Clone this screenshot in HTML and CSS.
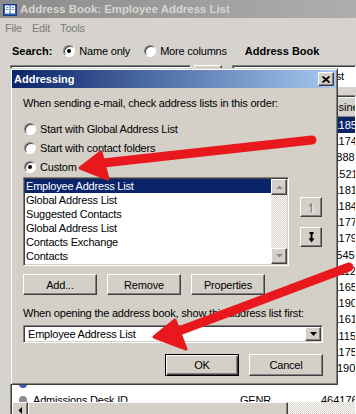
FILE: index.html
```html
<!DOCTYPE html>
<html lang="en">
<head>
    <meta charset="UTF-8">
    <meta name="viewport" content="width=device-width, initial-scale=1.0">
    <title>Address Book: Employee Address List</title>
    <link rel="stylesheet" href="styles.css">
</head>
<body>
    <div class="app">
        <div class="app-title">
            <svg class="book-icon" width="14" height="13" viewBox="0 0 14 13">
                <rect x="0.5" y="1.5" width="13" height="11" fill="#2f5fb8" stroke="#173a80"/>
                <rect x="2" y="2.5" width="4.5" height="8" fill="#fff"/>
                <rect x="7.5" y="2.5" width="4.5" height="8" fill="#fff"/>
                <path d="M3 4.5h2.5M3 6.5h2.5M8.5 4.5H11M8.5 6.5H11" stroke="#6d8fc9"/>
            </svg>
            <span>Address Book: Employee Address List</span>
        </div>
        <ul class="menubar">
            <li>File</li>
            <li>Edit</li>
            <li>Tools</li>
        </ul>
        <div class="searchbar">
            <b>Search:</b>
            <label class="opt"><span class="radio on"></span>Name only</label>
            <label class="opt"><span class="radio"></span>More columns</label>
            <b class="book-label">Address Book</b>
        </div>
        <div class="toolrow">
            <div class="field search-field"></div>
            <div class="btn go-btn">Go</div>
            <div class="field book-combo">Employee Address List</div>
        </div>
        <div class="listview">
            <div class="lv-header">
                <span class="col-name">Name</span>
                <span class="col-title">Title</span>
                <span class="col-phone">Business Phone</span>
            </div>
            <div class="lv-rows">
                <div class="lv-row selected"><i class="row-icon"></i><span class="col-name">Employee Services</span><span class="col-title">HR</span><span class="col-phone">4611852</span></div>
                <div class="lv-row"><i class="row-icon"></i><span class="col-name">Abbott, Karen</span><span class="col-title">ACCT</span><span class="col-phone">4611745</span></div>
                <div class="lv-row"><i class="row-icon"></i><span class="col-name">Accounts Payable</span><span class="col-title">ACCT</span><span class="col-phone">46 8881</span></div>
                <div class="lv-row"><i class="row-icon"></i><span class="col-name">Acosta, Maria</span><span class="col-title">NURS</span><span class="col-phone">4615217</span></div>
                <div class="lv-row"><i class="row-icon"></i><span class="col-name">Adams, Brian</span><span class="col-title">FAC</span><span class="col-phone">4611814</span></div>
                <div class="lv-row"><i class="row-icon"></i><span class="col-name">Adams, Julie</span><span class="col-title">ADMN</span><span class="col-phone">4611842</span></div>
                <div class="lv-row"><i class="row-icon"></i><span class="col-name">Adler, Thomas</span><span class="col-title">IT</span><span class="col-phone">4611779</span></div>
                <div class="lv-row"><i class="row-icon"></i><span class="col-name">Admin Office</span><span class="col-title">ADMN</span><span class="col-phone">4611796</span></div>
                <div class="lv-row"><i class="row-icon"></i><span class="col-name">Admissions</span><span class="col-title">GENR</span><span class="col-phone">46 5451</span></div>
                <div class="lv-row"><i class="row-icon"></i><span class="col-name">Admissions Counter</span><span class="col-title">GENR</span><span class="col-phone">461112</span></div>
                <div class="lv-row"><i class="row-icon"></i><span class="col-name">Admissions Desk A</span><span class="col-title">GENR</span><span class="col-phone">4611655</span></div>
                <div class="lv-row"><i class="row-icon"></i><span class="col-name">Admissions Desk B</span><span class="col-title">GENR</span><span class="col-phone">4611903</span></div>
                <div class="lv-row"><i class="row-icon"></i><span class="col-name">Admissions Desk C</span><span class="col-title">GENR</span><span class="col-phone">4611617</span></div>
                <div class="lv-row"><i class="row-icon"></i><span class="col-name">Admissions Desk D</span><span class="col-title">GENR</span><span class="col-phone">4611154</span></div>
                <div class="lv-row"><i class="row-icon"></i><span class="col-name">Admissions Desk E</span><span class="col-title">GENR</span><span class="col-phone">4611750</span></div>
                <div class="lv-row"><i class="row-icon"></i><span class="col-name">Admissions Desk F</span><span class="col-title">GENR</span><span class="col-phone">46-1901</span></div>
                <div class="lv-row"><i class="row-icon blue"></i><span class="col-name"></span><span class="col-title"></span><span class="col-phone"></span></div>
                <div class="lv-row"><i class="row-icon"></i><span class="col-name">Admissions Desk ID</span><span class="col-title">GENR</span><span class="col-phone">464176</span></div>
            </div>
            <div class="hscroll">
                <div class="btn sb-btn">
                    <svg width="4" height="7" viewBox="0 0 4 7"><path d="M4 0v7L0.5 3.5z" fill="#000"/></svg>
                </div>
                <div class="btn sb-thumb"></div>
                <div class="sb-track"></div>
            </div>
        </div>
    </div>

    <div class="dialog">
        <div class="dlg-title">
            <span>Addressing</span>
            <div class="btn close-btn">
                <svg width="8" height="7" viewBox="0 0 8 7"><path d="M0.5 0.5L7.5 6.5M7.5 0.5L0.5 6.5" stroke="#000" stroke-width="1.8"/></svg>
            </div>
        </div>
        <div class="dlg-body">
            <p class="label">When sending e-mail, check address lists in this order:</p>
            <div class="radios">
                <label class="opt"><span class="radio"></span>Start with Global Address List</label>
                <label class="opt"><span class="radio"></span>Start with contact folders</label>
                <label class="opt"><span class="radio on"></span>Custom</label>
            </div>
            <div class="list-row">
                <div class="listbox">
                    <ul class="items">
                        <li class="selected">Employee Address List</li>
                        <li>Global Address List</li>
                        <li>Suggested Contacts</li>
                        <li>Global Address List</li>
                        <li>Contacts Exchange</li>
                        <li>Contacts</li>
                    </ul>
                    <div class="vscroll">
                        <div class="btn sb-btn">
                            <svg width="7" height="4" viewBox="0 0 7 4"><path d="M0 4h7L3.5 0.5z" fill="#8a8a8a"/></svg>
                        </div>
                        <div class="sb-track"></div>
                        <div class="btn sb-btn">
                            <svg width="7" height="4" viewBox="0 0 7 4"><path d="M0 0h7L3.5 3.5z" fill="#8a8a8a"/></svg>
                        </div>
                    </div>
                </div>
                <div class="move-btns">
                    <div class="btn move-btn">
                        <svg width="7" height="11" viewBox="0 0 7 11">
                            <path d="M3.5 1.5v9M3.5 1.5L1.5 4.5" stroke="#fff" stroke-width="1.6" transform="translate(1 1)"/>
                            <path d="M3.5 1.5v9M3.5 1.5L1.5 4.5" stroke="#8a8a8a" stroke-width="1.6"/>
                        </svg>
                    </div>
                    <div class="btn move-btn">
                        <svg width="7" height="11" viewBox="0 0 7 11">
                            <path d="M1.5 1h4M3.5 1v8" stroke="#000" stroke-width="2"/>
                            <path d="M0.5 6.5h6L3.5 10.5z" fill="#000"/>
                        </svg>
                    </div>
                </div>
            </div>
            <div class="btn-row">
                <div class="btn">Add...</div>
                <div class="btn">Remove</div>
                <div class="btn">Properties</div>
            </div>
            <p class="label second">When opening the address book, show this address list first:</p>
            <div class="combo">
                <span>Employee Address List</span>
                <div class="btn drop-btn">
                    <svg width="7" height="4" viewBox="0 0 7 4"><path d="M0 0h7L3.5 4z" fill="#000"/></svg>
                </div>
            </div>
            <div class="ok-row">
                <div class="btn default">OK</div>
                <div class="btn">Cancel</div>
            </div>
        </div>
    </div>

    <svg class="marks" width="356" height="414" viewBox="0 0 356 414">
        <path d="M312 140L103 163" stroke="#e8181c" stroke-width="9" stroke-linecap="round"/>
        <path d="M80 168L101 152L108 179z" fill="#e8181c" stroke="#e8181c" stroke-width="3" stroke-linejoin="round"/>
        <path d="M349 267L179 331" stroke="#e8181c" stroke-width="9" stroke-linecap="round"/>
        <path d="M154 337L175 320L186 349z" fill="#e8181c" stroke="#e8181c" stroke-width="3" stroke-linejoin="round"/>
    </svg>
</body>
</html>
```

FILE: styles.css
```css
* {
    box-sizing: border-box;
}

body {
    margin: 0;
    width: 356px;
    height: 414px;
    overflow: hidden;
    position: relative;
    background: #d6d3ce;
    font-family: "Liberation Sans", Arial, sans-serif;
    font-size: 11px;
    letter-spacing: -0.2px;
    color: #000;
}

/* background window */

.app-title {
    height: 18px;
    display: flex;
    align-items: center;
    gap: 3px;
    padding-left: 3px;
    background: linear-gradient(90deg, #8b8b8b, #aeaeae);
    color: #d8d5cf;
    font-weight: bold;
    font-size: 11.4px;
    letter-spacing: 0;
}

.menubar {
    list-style: none;
    margin: 0;
    padding: 0;
    height: 20px;
    display: flex;
    align-items: center;
    color: #7a7a7a;
}

.menubar li {
    padding: 0 5px;
}

.searchbar {
    height: 26px;
    display: flex;
    align-items: center;
    padding-left: 12px;
}

.searchbar b {
    letter-spacing: 0;
}

.searchbar .opt {
    margin-left: 11px;
}

.searchbar .opt + .opt {
    margin-left: 14px;
}

.book-label {
    margin-left: 18px;
}

.opt {
    display: flex;
    align-items: center;
}

.radio {
    width: 12px;
    height: 12px;
    flex: none;
    position: relative;
    border-radius: 50%;
    background: #fff;
    border: 1px solid;
    border-color: #808080 #fff #fff #808080;
    box-shadow: inset 1px 1px #404040;
    margin-right: 4px;
}

.radio.on::after {
    content: "";
    position: absolute;
    left: 3px;
    top: 3px;
    width: 4px;
    height: 4px;
    border-radius: 50%;
    background: #000;
}

.toolrow {
    height: 25px;
    display: flex;
    padding: 1px 0 0 10px;
}

.field {
    height: 22px;
    background: #fff;
    border: 1px solid;
    border-color: #808080 #fff #fff #808080;
    box-shadow: inset 1px 1px #404040;
}

.search-field {
    width: 190px;
}

.go-btn {
    width: 30px;
    height: 22px;
    margin-left: 3px;
}

.book-combo {
    width: 130px;
    margin-left: 10px;
    padding: 0 0 0 3px;
    line-height: 20px;
    white-space: nowrap;
    overflow: hidden;
}

.listview {
    margin: 6px 0 0 10px;
    height: 330px;
    background: #fff;
    border: 1px solid;
    border-color: #808080 #fff #fff #808080;
    box-shadow: inset 1px 1px #404040;
    padding: 1px 0 0 1px;
    overflow: hidden;
}

.lv-header {
    display: flex;
    height: 20px;
    background: #d6d3ce;
    white-space: nowrap;
}

.lv-header span {
    display: flex;
    align-items: center;
    padding-left: 1px;
    border: 1px solid;
    border-color: #fff #808080 #808080 #fff;
}

.lv-rows {
    height: 285px;
    overflow: hidden;
}

.lv-row {
    height: 16.2px;
    display: flex;
    align-items: center;
    white-space: nowrap;
    padding-left: 7px;
}

.lv-row.selected {
    background: #0a246a;
    color: #fff;
}

.row-icon {
    width: 8px;
    height: 8px;
    border-radius: 50%;
    background: #8c8c8c;
    margin-right: 6px;
    flex: none;
}

.row-icon.blue {
    background: #4058c8;
}

.col-name {
    width: 207px;
    flex: none;
}

.lv-header .col-name {
    width: 228px;
}

.col-title {
    width: 83px;
    flex: none;
}

.col-phone {
    width: 110px;
    flex: none;
    letter-spacing: 0;
}

.lv-row .col-phone {
    margin-left: -2px;
}

.hscroll {
    height: 16px;
    display: flex;
}

.sb-btn {
    width: 16px;
    height: 16px;
    flex: none;
}

.sb-thumb {
    width: 260px;
    height: 16px;
    flex: none;
}

.sb-track {
    flex: 1;
    background: repeating-conic-gradient(#d4d0c8 0 25%, #fff 0 50%) 0 0 / 2px 2px;
}

/* classic 3d button */

.btn {
    display: flex;
    align-items: center;
    justify-content: center;
    background: #d4d0c8;
    border: 1px solid;
    border-color: #fff #404040 #404040 #fff;
    box-shadow: inset -1px -1px #808080;
    white-space: nowrap;
}

.btn.default {
    border-color: #000;
    box-shadow: inset 1px 1px #fff, inset -1px -1px #404040, inset -2px -2px #808080;
}

/* dialog */

.dialog {
    position: absolute;
    left: 10px;
    top: 68px;
    width: 328px;
    height: 317px;
    background: #d4d0c8;
    border: 1px solid;
    border-color: #d4d0c8 #404040 #404040 #d4d0c8;
    box-shadow: inset 1px 1px #fff, inset -1px -1px #808080;
    padding: 1px;
}

.dlg-title {
    height: 18px;
    display: flex;
    align-items: center;
    justify-content: space-between;
    padding: 0 2px 0 2px;
    background: linear-gradient(90deg, #0a246a, #a6caf0);
    color: #fff;
    font-weight: bold;
    letter-spacing: 0;
}

.close-btn {
    width: 16px;
    height: 14px;
}

.dlg-body {
    padding: 8px 13px 0 11px;
}

.label {
    margin: 0;
    line-height: 14px;
    white-space: nowrap;
}

.label.second {
    margin-top: 11px;
}

.radios {
    margin-top: 9px;
}

.radios .opt {
    height: 19px;
}

.radios .radio {
    margin-left: 1px;
}

.list-row {
    margin-top: 1px;
    display: flex;
    gap: 11px;
}

.listbox {
    width: 266px;
    height: 89px;
    display: flex;
    background: #fff;
    border: 1px solid;
    border-color: #808080 #fff #fff #808080;
    box-shadow: inset 1px 1px #404040, inset -1px -1px #d4d0c8;
    padding: 1px;
}

.items {
    list-style: none;
    margin: 0;
    padding: 0;
    flex: 1;
}

.items li {
    height: 14px;
    line-height: 14px;
    padding-left: 1px;
}

.items li.selected {
    background: #0a246a;
    color: #fff;
}

.vscroll {
    width: 16px;
    display: flex;
    flex-direction: column;
}

.move-btns {
    display: flex;
    flex-direction: column;
    gap: 10px;
    padding-top: 20px;
}

.move-btn {
    width: 22px;
    height: 20px;
}

.btn-row {
    margin-top: 8px;
    display: flex;
    gap: 10px;
}

.btn-row .btn {
    width: 74px;
    height: 21px;
}

.combo {
    margin-top: 5px;
    width: 300px;
    height: 18px;
    display: flex;
    align-items: center;
    justify-content: space-between;
    background: #fff;
    border: 1px solid;
    border-color: #808080 #fff #fff #808080;
    box-shadow: inset 1px 1px #404040, inset -1px -1px #d4d0c8;
    padding: 1px 1px 1px 4px;
}

.drop-btn {
    width: 16px;
    height: 14px;
}

.ok-row {
    margin-top: 11px;
    display: flex;
    justify-content: flex-end;
    gap: 10px;
}

.ok-row .btn {
    width: 74px;
    height: 22px;
}

.marks {
    position: absolute;
    left: 0;
    top: 0;
    pointer-events: none;
}
```
